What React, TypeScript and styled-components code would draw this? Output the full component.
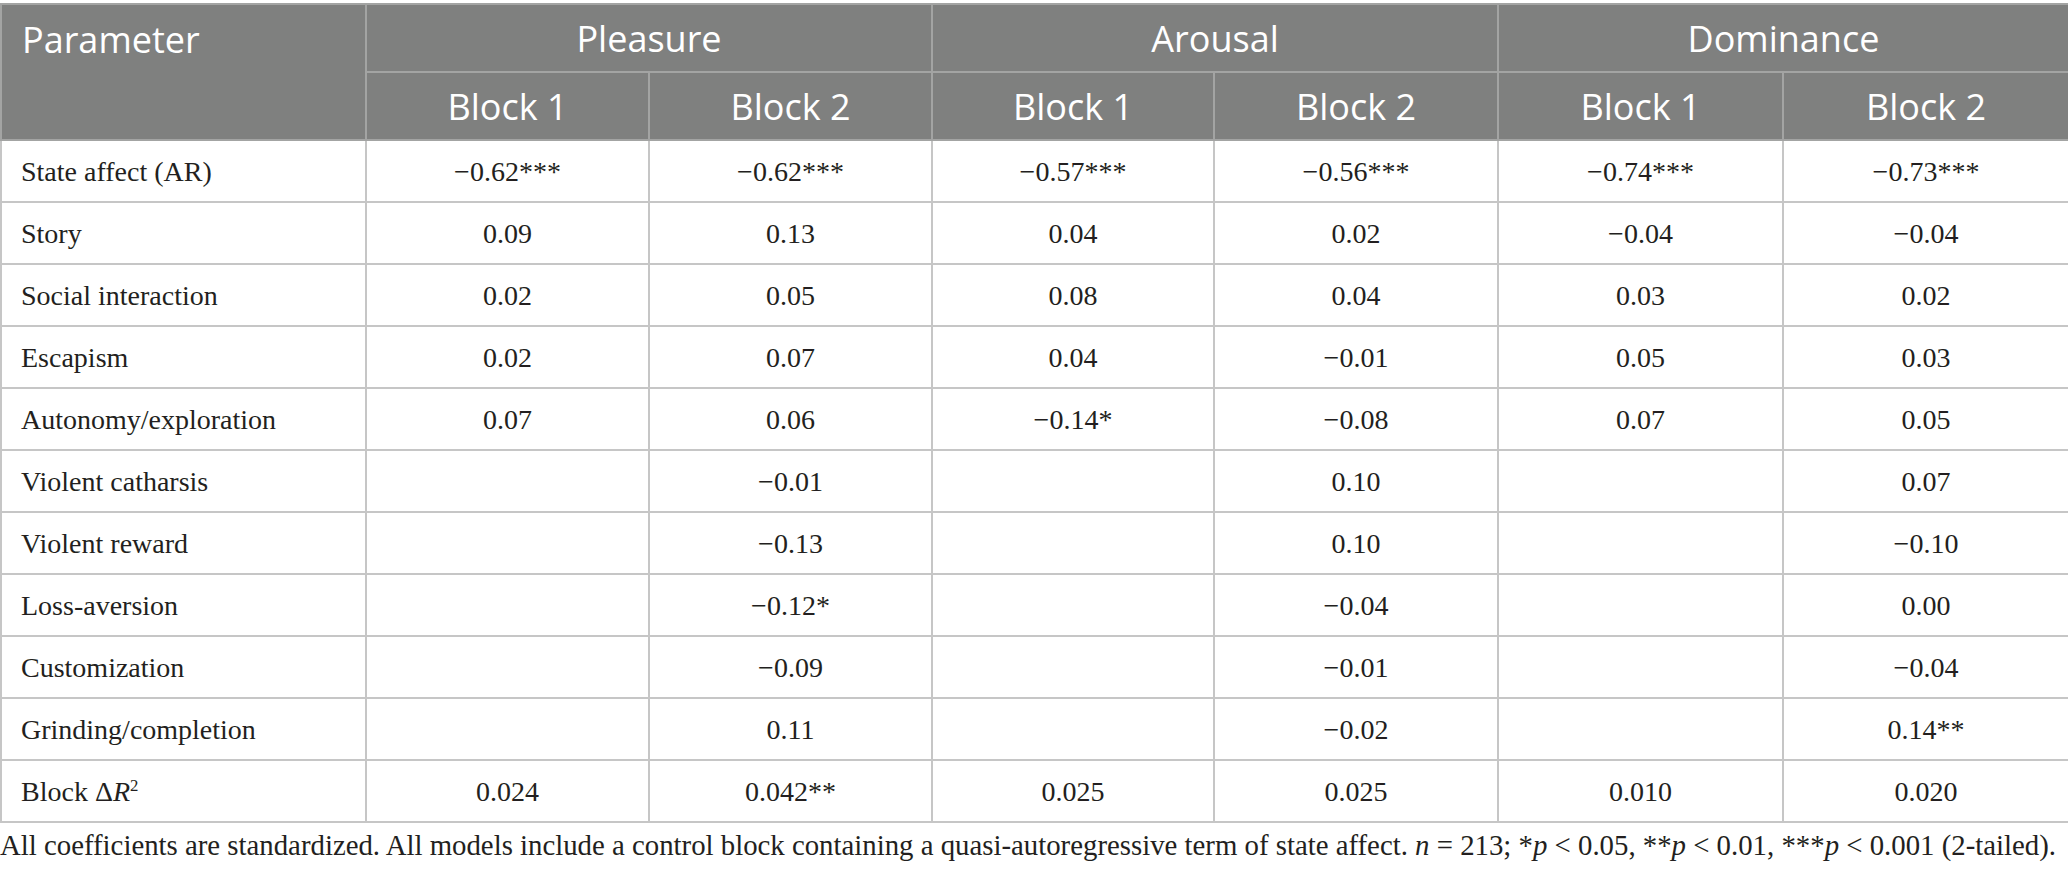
import React from 'react'
import styled, { createGlobalStyle } from 'styled-components'

const GlobalStyle = createGlobalStyle`
  html, body {
    margin: 0;
    padding: 0;
    background: #fff;
  }
`

const Page = styled.div`
  padding-top: 3px;
  width: 2068px;
`

const Table = styled.table`
  width: 2068px;
  border-collapse: collapse;
  table-layout: fixed;
  border: 2px solid #c4c4c4;
`

const HeadCell = styled.th<{ $top?: boolean }>`
  background: #7f807f;
  color: #fff;
  font-family: 'Open Sans', 'Noto Sans', sans-serif;
  font-weight: 400;
  font-size: 36px;
  text-align: center;
  vertical-align: ${p => (p.$top ? 'top' : 'middle')};
  border: 2px solid #a3a4a3;
  padding: 0;
`

const ParamHead = styled(HeadCell)`
  text-align: left;
  padding: 10px 0 0 20px;
`

const HeadRow = styled.tr`
  height: 68px;
`

const Row = styled.tr`
  height: 62px;
`

const Cell = styled.td<{ $label?: boolean }>`
  font-family: 'Liberation Serif', 'Times New Roman', serif;
  font-size: 28px;
  color: #231f20;
  text-align: ${p => (p.$label ? 'left' : 'center')};
  padding: ${p => (p.$label ? '2px 0 0 19px' : '2px 0 0 0')};
  border: 2px solid #c6c6c6;
  white-space: nowrap;
`

const Note = styled.p`
  margin: 6px 0 0 0;
  font-family: 'Liberation Serif', 'Times New Roman', serif;
  font-size: 28.8px;
  color: #231f20;
  white-space: nowrap;
`

const M = '\u2212'

const rows: [string, ...string[]][] = [
  ['State affect (AR)', `${M}0.62***`, `${M}0.62***`, `${M}0.57***`, `${M}0.56***`, `${M}0.74***`, `${M}0.73***`],
  ['Story', '0.09', '0.13', '0.04', '0.02', `${M}0.04`, `${M}0.04`],
  ['Social interaction', '0.02', '0.05', '0.08', '0.04', '0.03', '0.02'],
  ['Escapism', '0.02', '0.07', '0.04', `${M}0.01`, '0.05', '0.03'],
  ['Autonomy/exploration', '0.07', '0.06', `${M}0.14*`, `${M}0.08`, '0.07', '0.05'],
  ['Violent catharsis', '', `${M}0.01`, '', '0.10', '', '0.07'],
  ['Violent reward', '', `${M}0.13`, '', '0.10', '', `${M}0.10`],
  ['Loss-aversion', '', `${M}0.12*`, '', `${M}0.04`, '', '0.00'],
  ['Customization', '', `${M}0.09`, '', `${M}0.01`, '', `${M}0.04`],
  ['Grinding/completion', '', '0.11', '', `${M}0.02`, '', '0.14**'],
]

const deltas = ['0.024', '0.042**', '0.025', '0.025', '0.010', '0.020']

const widths = [365, 283, 283, 282, 284, 285, 286]

export default function App() {
  return (
    <Page>
      <GlobalStyle />
      <Table>
        <colgroup>
          {widths.map((w, i) => (
            <col key={i} style={{ width: w }} />
          ))}
        </colgroup>
        <thead>
          <HeadRow>
            <ParamHead rowSpan={2} $top>Parameter</ParamHead>
            <HeadCell colSpan={2}>Pleasure</HeadCell>
            <HeadCell colSpan={2}>Arousal</HeadCell>
            <HeadCell colSpan={2}>Dominance</HeadCell>
          </HeadRow>
          <HeadRow>
            <HeadCell>Block 1</HeadCell>
            <HeadCell>Block 2</HeadCell>
            <HeadCell>Block 1</HeadCell>
            <HeadCell>Block 2</HeadCell>
            <HeadCell>Block 1</HeadCell>
            <HeadCell>Block 2</HeadCell>
          </HeadRow>
        </thead>
        <tbody>
          {rows.map(([label, ...vals]) => (
            <Row key={label}>
              <Cell $label>{label}</Cell>
              {vals.map((v, i) => (
                <Cell key={i}>{v}</Cell>
              ))}
            </Row>
          ))}
          <Row>
            <Cell $label>
              Block Δ<i>R</i>
              <sup style={{ fontSize: '0.6em' }}>2</sup>
            </Cell>
            {deltas.map((v, i) => (
              <Cell key={i}>{v}</Cell>
            ))}
          </Row>
        </tbody>
      </Table>
      <Note>
        All coefficients are standardized. All models include a control block containing a quasi-autoregressive term of state
        affect. <i>n</i> = 213; *<i>p</i> &lt; 0.05, **<i>p</i> &lt; 0.01, ***<i>p</i> &lt; 0.001 (2-tailed).
      </Note>
    </Page>
  )
}
